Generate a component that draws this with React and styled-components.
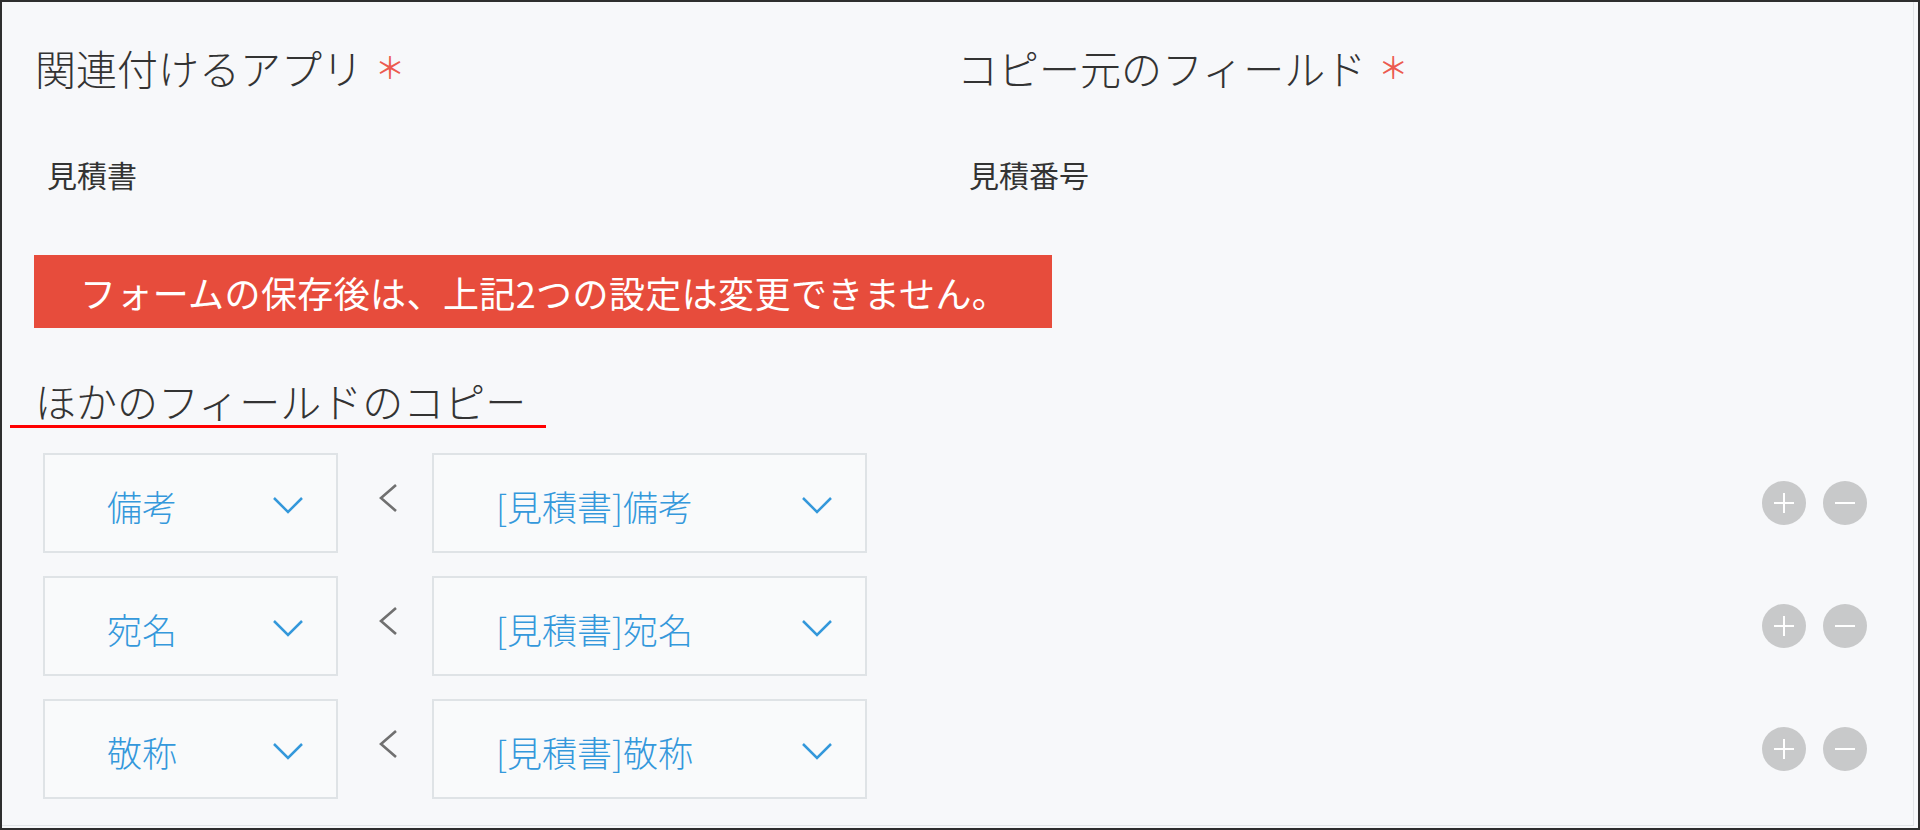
import React from "react";
import styled, { createGlobalStyle } from "styled-components";

const GlobalStyle = createGlobalStyle`
    html, body {
        margin: 0;
        padding: 0;
        background: #f7f8fa;
    }
    * {
        box-sizing: border-box;
    }
`;

const Frame = styled.div`
    width: 1920px;
    height: 830px;
    border: 2px solid #2e2e2e;
    background: #f7f8fa;
    font-family: "Noto Sans CJK JP", "Noto Sans", sans-serif;
    color: #333;
    overflow: hidden;
`;

const Panel = styled.div`
    width: 1912px;
    height: 824px;
    border-right: 1px solid #e1e4e7;
    border-bottom: 1px solid #e1e4e7;
    padding-top: 41px;
`;

const SettingGrid = styled.div`
    display: grid;
    grid-template-columns: 922px 1fr;
    padding-left: 33px;
`;

const Label = styled.div`
    height: 48px;
    font-size: 41px;
    line-height: 48px;
    font-weight: 300;
    white-space: nowrap;
`;

const Required = styled.span`
    display: inline-block;
    color: #ec5a4f;
    margin-left: 12px;
    font-size: 30px;
    line-height: 1;
    font-weight: 400;
    vertical-align: 6px;
`;

const Value = styled.div`
    font-size: 30px;
    line-height: 36px;
    margin-top: 65px;
    padding-left: 12px;
    font-weight: 400;
    color: #333;
`;

const Banner = styled.div`
    margin: 63px 0 0 32px;
    width: 1018px;
    height: 73px;
    background: #e74c3c;
    color: #fff;
    font-size: 36px;
    letter-spacing: 0.4px;
    display: flex;
    align-items: center;
    padding-left: 46px;
    white-space: nowrap;
`;

const SectionTitle = styled.div`
    position: relative;
    margin: 48px 0 0 33px;
    font-size: 41px;
    line-height: 48px;
    font-weight: 300;
    width: max-content;

    &::after {
        content: "";
        position: absolute;
        left: -25px;
        right: -20px;
        bottom: -4px;
        height: 3px;
        background: #ff0000;
    }
`;

const Rows = styled.div`
    display: flex;
    flex-direction: column;
    gap: 23px;
    margin-top: 29px;
`;

const Row = styled.div`
    display: flex;
    align-items: center;
    height: 100px;
    padding: 0 46px 0 41px;
`;

const Select = styled.div`
    width: ${p => p.width}px;
    height: 100px;
    border: 2px solid #dfe3e6;
    background: #f9fafb;
    display: flex;
    align-items: center;
    justify-content: space-between;
    padding: 4px 32px 0 62px;
    color: #3498db;
    font-size: 35px;
    font-weight: 300;
    white-space: nowrap;
`;

const Arrow = styled.div`
    width: 20px;
    height: 30px;
    margin: 0 34px 10px 40px;
    display: flex;
`;

const Actions = styled.div`
    margin-left: auto;
    display: flex;
    gap: 17px;
`;

const RoundButton = styled.div`
    width: 44px;
    height: 44px;
    border-radius: 50%;
    background: #c8c9ca;
    display: flex;
    align-items: center;
    justify-content: center;
`;

const DownIcon = () => (
    <svg width="32" height="18" viewBox="0 0 32 18">
        <polyline points="2,2 16,16 30,2" fill="none" stroke="#3498db" strokeWidth="2.5" />
    </svg>
);

const LeftIcon = () => (
    <svg width="20" height="30" viewBox="0 0 20 30">
        <polyline points="18,2 3,15 18,28" fill="none" stroke="#707070" strokeWidth="2.6" />
    </svg>
);

const PlusIcon = () => (
    <svg width="22" height="22" viewBox="0 0 22 22">
        <path d="M11 1 V21 M1 11 H21" stroke="#fff" strokeWidth="2" />
    </svg>
);

const MinusIcon = () => (
    <svg width="22" height="22" viewBox="0 0 22 22">
        <path d="M1 11 H21" stroke="#fff" strokeWidth="2" />
    </svg>
);

const mappings = [
    { dest: "備考", src: "[見積書]備考" },
    { dest: "宛名", src: "[見積書]宛名" },
    { dest: "敬称", src: "[見積書]敬称" },
];

const App = () => {
    return (
        <>
            <GlobalStyle />
            <Frame>
                <Panel>
                    <SettingGrid>
                        <div>
                            <Label>関連付けるアプリ<Required>＊</Required></Label>
                            <Value>見積書</Value>
                        </div>
                        <div>
                            <Label>コピー元のフィールド<Required>＊</Required></Label>
                            <Value>見積番号</Value>
                        </div>
                    </SettingGrid>
                    <Banner>フォームの保存後は、上記2つの設定は変更できません。</Banner>
                    <SectionTitle>ほかのフィールドのコピー</SectionTitle>
                    <Rows>
                        {mappings.map(m => (
                            <Row key={m.dest}>
                                <Select width={295}>
                                    <span>{m.dest}</span>
                                    <DownIcon />
                                </Select>
                                <Arrow><LeftIcon /></Arrow>
                                <Select width={435}>
                                    <span>{m.src}</span>
                                    <DownIcon />
                                </Select>
                                <Actions>
                                    <RoundButton><PlusIcon /></RoundButton>
                                    <RoundButton><MinusIcon /></RoundButton>
                                </Actions>
                            </Row>
                        ))}
                    </Rows>
                </Panel>
            </Frame>
        </>
    );
};

export default App;
